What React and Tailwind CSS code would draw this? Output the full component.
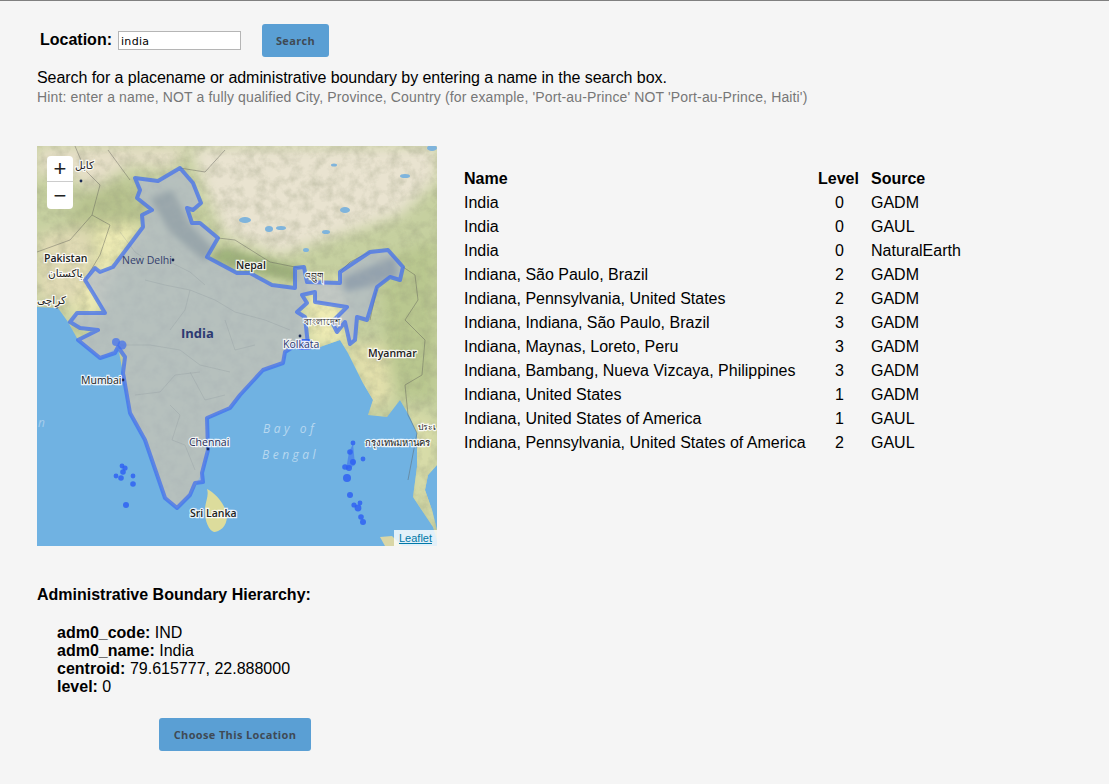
const INDIA = "135,178 158,181 180,168 193,183 201,203 193,210 187,208 192,223 200,223 218,238 207,257 237,273 250,273 272,285 295,288 295,268 304,267 307,282 340,283 340,272 370,252 388,250 403,267 400,280 390,277 377,287 367,320 357,317 355,340 350,344 345,322 337,332 332,322 347,307 315,302 315,292 302,295 307,303 297,312 305,317 308,345 296,345 285,352 283,363 263,370 240,395 230,408 207,418 208,450 202,473 203,482 195,483 190,495 177,508 165,498 145,440 130,413 123,373 125,357 118,347 115,353 100,358 78,340 98,330 80,328 70,322 77,313 105,313 93,293 85,280 95,268 100,272 113,267 143,227 142,215 152,210 137,198 140,190";

const LAND = "37,146 437,146 437,465 428,475 425,490 432,510 437,530 437,540 433,527 413,497 417,467 417,433 410,417 400,400 387,417 368,415 373,400 363,383 348,353 340,340 320,347 296,345 285,352 283,363 263,370 240,395 230,408 207,418 208,450 202,473 190,495 177,508 165,498 145,440 130,413 123,373 118,347 100,358 78,340 68,322 58,308 37,307";

const islands = [
  [122, 466, 2.4], [125, 468, 2.6], [123, 472, 2.8], [116, 476, 2.4], [121, 478, 2.8], [133, 476, 2.4], [133, 484, 2.8], [126, 505, 3],
  [353, 443, 2.4], [350, 452, 2.8], [353, 462, 3], [345, 467, 2.8], [349, 468, 3], [347, 478, 4],
  [350, 495, 3], [354, 505, 2.6], [360, 503, 2.4], [358, 508, 3.4], [361, 517, 2.8], [363, 522, 3], [363, 459, 2.4], [368, 446, 2],
];

const rivers = [
  "120,232 135,252 150,262 170,262 190,272 205,285",
  "145,280 165,285 190,290 185,310 170,330",
  "190,290 215,300 235,312 265,320 290,330",
  "120,345 150,345 180,350 200,365 230,372",
  "135,395 160,392 175,375 200,372",
  "170,405 180,415 172,440 185,445 195,470",
  "190,372 205,400 225,395",
  "225,320 235,350 255,345",
];

const borders = [
  "75,146 85,170 100,185 92,215 70,240 37,252",
  "92,215 110,225 100,255 85,280",
  "130,180 108,150",
  "180,168 205,172 225,150",
  "218,238 235,240 270,262 300,268",
  "340,272 350,262 370,252",
  "403,267 415,275 418,300 405,320 425,340 422,375 405,385 408,415 417,433 408,480",
  "377,287 370,320",
];

const ROWS = [
  ["India", 0, "GADM"],
  ["India", 0, "GAUL"],
  ["India", 0, "NaturalEarth"],
  ["Indiana, São Paulo, Brazil", 2, "GADM"],
  ["Indiana, Pennsylvania, United States", 2, "GADM"],
  ["Indiana, Indiana, São Paulo, Brazil", 3, "GADM"],
  ["Indiana, Maynas, Loreto, Peru", 3, "GADM"],
  ["Indiana, Bambang, Nueva Vizcaya, Philippines", 3, "GADM"],
  ["Indiana, United States", 1, "GADM"],
  ["Indiana, United States of America", 1, "GAUL"],
  ["Indiana, Pennsylvania, United States of America", 2, "GAUL"],
];

const Label = ({ x, y, size = 10.5, weight = 400, fill = "#222", children, spacing, halo = true, italic }) => (
  <text
    x={x}
    y={y}
    fontSize={size}
    fontWeight={weight}
    fontStyle={italic ? "italic" : "normal"}
    fill={fill}
    letterSpacing={spacing}
    stroke={halo ? "#fff" : "none"}
    strokeWidth={halo ? 2.4 : 0}
    strokeOpacity="0.85"
    paintOrder="stroke"
    fontFamily="'Open Sans', 'DejaVu Sans', 'Noto Sans', sans-serif"
  >
    {children}
  </text>
);

const MapArt = () => (
  <svg viewBox="37 146 400 400" className="block w-[400px] h-[400px]">
    <defs>
      <clipPath id="land"><polygon points={LAND} /></clipPath>
      <clipPath id="india"><polygon points={INDIA} /></clipPath>
      <filter id="soft" x="-20%" y="-20%" width="140%" height="140%"><feGaussianBlur stdDeviation="7" /></filter>
      <filter id="softer" x="-20%" y="-20%" width="140%" height="140%"><feGaussianBlur stdDeviation="3" /></filter>
      <filter id="relief" x="0" y="0" width="100%" height="100%">
        <feTurbulence type="fractalNoise" baseFrequency="0.09" numOctaves="4" seed="8" />
        <feColorMatrix values="0 0 0 0 0.3  0 0 0 0 0.32  0 0 0 0 0.2  1.6 0 0 0 -0.62" />
      </filter>
    </defs>
    <rect x="37" y="146" width="400" height="400" fill="#70b2e2" />
    <g clipPath="url(#land)">
      <rect x="37" y="146" width="400" height="400" fill="#c6d0a0" />
      <g filter="url(#soft)">
        <polygon points="190,146 437,146 437,180 400,215 340,235 280,255 225,235 205,190" fill="#e9e3d0" />
        <polygon points="37,146 190,146 170,170 130,165 90,190 60,170 37,180" fill="#e6dfc8" />
        <polygon points="85,190 130,180 150,215 125,260 95,275 60,250 70,215" fill="#b7c28e" />
        <polygon points="37,235 90,225 95,275 75,305 37,300" fill="#e0dab4" />
        <polygon points="95,225 145,225 115,268 98,275" fill="#eeebb4" />
        <polygon points="90,270 115,262 100,315 70,318" fill="#ece9b3" />
        <polygon points="380,260 437,240 437,400 400,400 385,350" fill="#b9c78f" />
        <polygon points="345,345 385,345 392,400 370,410" fill="#e3e0ac" />
        <polygon points="305,280 345,280 345,345 310,345" fill="#eeebb4" />
        <polygon points="405,405 437,420 437,530 415,500" fill="#d8dca8" />
      </g>
      <g clipPath="url(#india)">
        <g filter="url(#softer)">
          <polygon points="150,198 172,190 190,225 215,250 205,262 170,232" fill="#6c7f66" />
          <polygon points="342,278 395,256 398,276 375,285 345,292" fill="#5f7570" />
        </g>
      </g>
      <polygon points="208,258 237,270 300,282 300,268 225,248" fill="#9fb27c" filter="url(#softer)" />
      <rect x="37" y="146" width="400" height="400" filter="url(#relief)" opacity="0.42" />
      {[[245, 220, 6, 3], [269, 229, 4, 3], [281, 228, 5, 2], [326, 232, 4, 2], [345, 210, 5, 3], [334, 165, 3, 1.5], [405, 176, 5, 2], [432, 148, 5, 3], [306, 250, 3, 2]].map(([cx, cy, rx, ry]) => (
        <ellipse key={`${cx}-${cy}`} cx={cx} cy={cy} rx={rx} ry={ry} fill="#7fb4dc" />
      ))}
    </g>
    <g fill="none" stroke="#5a5a55" strokeWidth="0.6" opacity="0.7">
      {borders.map((d) => <polyline key={d} points={d} />)}
    </g>
    <path d="M207,489 C214,492 226,504 227,516 C227,527 219,532 214,532 C208,530 204,518 205,508 C206,500 209,495 207,489 Z" fill="#dcdc9c" />
    <polygon points="380,537 392,536 402,546 385,546" fill="#d9d6a6" />
    <polygon points={INDIA} fill="#aeb8cc" fillOpacity="0.68" />
    <g fill="none" stroke="#7d8891" strokeWidth="0.4" opacity="0.55">
      {rivers.map((d) => <polyline key={d} points={d} />)}
    </g>
    <polygon points={INDIA} fill="none" stroke="#3f6df0" strokeWidth="4" strokeOpacity="0.72" strokeLinejoin="round" />
    <rect x="296" y="339" width="16" height="11" rx="4" fill="#2f62f2" fillOpacity="0.9" />
    <circle cx="116" cy="342" r="4" fill="#3f6df0" fillOpacity="0.7" />
    <circle cx="122" cy="345" r="4.5" fill="#3f6df0" fillOpacity="0.7" />
    {islands.map(([cx, cy, r]) => <circle key={`${cx}-${cy}`} cx={cx} cy={cy} r={r} fill="#2f62f2" fillOpacity="0.85" />)}
    <polygon points="349,452 353,444 355,465 346,470" fill="#2f62f2" fillOpacity="0.5" />
    {[[81, 181], [173, 260], [57, 307], [123, 380], [208, 449], [300, 336]].map(([cx, cy]) => (
      <circle key={cx} cx={cx} cy={cy} r="1.4" fill="#1b2a55" />
    ))}
    <Label x={75} y={169}>کابل</Label>
    <Label x={44} y={262} weight={600}>Pakistan</Label>
    <Label x={48} y={277}>پاکستان</Label>
    <Label x={37} y={304}>کراچی</Label>
    <Label x={122} y={264} fill="#34406e" halo={false}>New Delhi</Label>
    <Label x={181} y={338} size={13} weight={700} fill="#2d3a72" halo={false}>India</Label>
    <Label x={236} y={269} weight={600}>Nepal</Label>
    <Label x={305} y={279} size={9}>འབྲུག</Label>
    <Label x={304} y={325} size={9}>বাংলাদেশ</Label>
    <Label x={283} y={348} fill="#2d3a72">Kolkata</Label>
    <Label x={368} y={357} weight={600}>Myanmar</Label>
    <Label x={81} y={384}>Mumbai</Label>
    <Label x={189} y={446} fill="#1f2a55">Chennai</Label>
    <Label x={190} y={517} weight={600}>Sri Lanka</Label>
    <Label x={365} y={446} size={9.5}>กรุงเทพมหานคร</Label>
    <Label x={418} y={430} size={8.5}>ประเ</Label>
    <Label x={263} y={433} size={12} fill="#b7d8f0" spacing="3.5" halo={false} italic>Bay of</Label>
    <Label x={262} y={459} size={12} fill="#b7d8f0" spacing="3.5" halo={false} italic>Bengal</Label>
    <Label x={38} y={427} size={12} fill="#a5cdec" halo={false} italic>n</Label>
  </svg>
);

const Btn = ({ className, children }) => (
  <button className={`bg-[#5a9fd4] rounded-[3px] text-[#3f4a55] text-[11px] font-bold font-['Open_Sans',sans-serif] tracking-[0.35px] ${className}`}>
    {children}
  </button>
);

export default function App() {
  return (
    <div className="min-h-[784px] bg-[#f5f5f5] border-t border-[#808080] font-['Liberation_Sans',sans-serif] text-base leading-[18px] text-black overflow-hidden">
      <div className="pl-[37px] pt-[23px]">
        <div className="flex items-center pl-[3px]">
          <label className="font-bold w-[78px] -mt-[2px]">Location:</label>
          <input
            readOnly
            value="india"
            className="w-[123px] h-[19px] bg-white border border-[#b5b5b5] px-[2px] pt-[1px] text-[11px] tracking-[0.3px] font-['DejaVu_Sans',sans-serif] outline-none"
          />
          <Btn className="ml-[21px] w-[67px] h-[33px] pt-[1px]">Search</Btn>
        </div>
        <p className="mt-[12px] tracking-[-0.06px]">Search for a placename or administrative boundary by entering a name in the search box.</p>
        <p className="mt-[2px] text-sm tracking-[0.14px] leading-[16px] text-[#777777]">
          Hint: enter a name, NOT a fully qualified City, Province, Country (for example, 'Port-au-Prince' NOT 'Port-au-Prince, Haiti')
        </p>

        <div className="flex mt-[41px]">
          <div className="relative w-[400px] h-[400px] shrink-0 overflow-hidden">
            <MapArt />
            <div className="absolute left-[10px] top-[10px] w-[26px] h-[53px] bg-white rounded-[4px] flex flex-col text-[#222]">
              <div className="h-[26px] border-b border-[#cccccc] flex items-center justify-center text-[22px]">+</div>
              <div className="flex-1 flex items-center justify-center text-[22px]">−</div>
            </div>
            <div className="absolute right-0 bottom-0 h-[16px] px-[5px] bg-white/80 text-[11px] leading-[16px]">
              <span className="text-[#0078a8] underline">Leaflet</span>
            </div>
          </div>

          <table className="ml-[27px] mt-[21px] self-start border-collapse">
            <thead>
              <tr className="h-[24px] font-bold text-left">
                <th className="w-[354px] p-0">Name</th>
                <th className="w-[53px] p-0">Level</th>
                <th className="p-0">Source</th>
              </tr>
            </thead>
            <tbody>
              {ROWS.map(([name, level, source], i) => (
                <tr key={i} className="h-[24px]">
                  <td className="p-0">{name}</td>
                  <td className="p-0 pl-[17px]">{level}</td>
                  <td className="p-0">{source}</td>
                </tr>
              ))}
            </tbody>
          </table>
        </div>

        <h3 className="mt-[40px] font-bold">Administrative Boundary Hierarchy:</h3>
        <div className="mt-[20px] ml-[20px]">
          <div><b>adm0_code:</b> IND</div>
          <div><b>adm0_name:</b> India</div>
          <div><b>centroid:</b> 79.615777, 22.888000</div>
          <div><b>level:</b> 0</div>
        </div>
        <Btn className="block ml-[122px] mt-[22px] w-[152px] h-[33px]">Choose This Location</Btn>
      </div>
    </div>
  );
}
